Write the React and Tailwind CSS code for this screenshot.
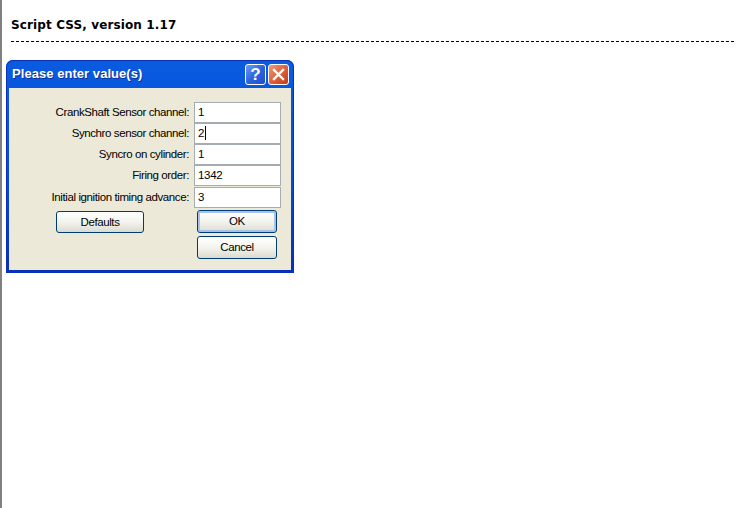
const fields = [
  { label: 'CrankShaft Sensor channel:', value: '1' },
  { label: 'Synchro sensor channel:', value: '2', caret: true },
  { label: 'Syncro on cylinder:', value: '1' },
  { label: 'Firing order:', value: '1342' },
  { label: 'Initial ignition timing advance:', value: '3', gap: true },
];

function XpButton({ label, focused }) {
  return (
    <button
      className={`h-[23px] w-[80px] rounded-[3px] border border-[#003c74] bg-gradient-to-b from-white via-[#f4f4ee] to-[#dcdbd0] text-[11.5px] leading-none tracking-[-0.4px] text-black ${
        focused ? 'shadow-[inset_0_0_0_2px_#a9c2e8]' : ''
      }`}
    >
      {label}
    </button>
  );
}

function TitleButtons() {
  return (
    <div className="flex gap-[2px]">
      <div className="flex h-[21px] w-[21px] items-center justify-center rounded-[3px] border border-white bg-gradient-to-br from-[#6f9bf0] via-[#2f62e0] to-[#1f4ecb] text-[17px] font-bold leading-none text-white">
        ?
      </div>
      <div className="flex h-[21px] w-[21px] items-center justify-center rounded-[3px] border border-white bg-gradient-to-br from-[#ee9a7e] via-[#e0603c] to-[#c23a1a]">
        <svg width="13" height="13" viewBox="0 0 13 13">
          <path d="M2 2 L11 11 M11 2 L2 11" stroke="#fff" strokeWidth="2.4" strokeLinecap="square" />
        </svg>
      </div>
    </div>
  );
}

export default function App() {
  return (
    <div className="h-[508px] w-[736px] overflow-hidden border-l-2 border-[#808080] bg-white font-['Liberation_Sans',sans-serif] text-black">
      <div className="pl-[9px] pt-[18px]">
        <h1 className="h-[15px] font-['DejaVu_Sans',sans-serif] text-[12px] font-bold leading-[15px] tracking-[0.12px]">
          Script CSS, version 1.17
        </h1>
        <div className="mt-[8px] h-px w-[725px] bg-[repeating-linear-gradient(90deg,#000_0,#000_3px,transparent_3px,transparent_5px)]" />
      </div>

      <div className="ml-[4px] mt-[18px] w-[288px] rounded-t-[7px] bg-gradient-to-b from-[#0a5be0] via-[#0050dc] to-[#0831b8] px-[3px] pb-[3px] shadow-[inset_0_0_0_1px_#0831b8]">
        <div className="flex h-[28px] items-center justify-between pl-[3px] pr-[2px]">
          <span className="text-[13px] font-bold tracking-[0.05px] text-white [text-shadow:1px_1px_0_#0f2f9a]">
            Please enter value(s)
          </span>
          <TitleButtons />
        </div>

        <div className="h-[182px] bg-[#ece9d8] pt-[14px]">
          <div className="flex flex-col">
            {fields.map((f) => (
              <div
                key={f.label}
                className={`mb-px flex h-[20px] items-center justify-end pr-[10px] ${f.gap ? 'mt-px' : ''}`}
              >
                <span className="mr-[5px] pt-[2px] text-[11.5px] tracking-[-0.4px]">{f.label}</span>
                <div className="flex h-[21px] w-[87px] items-center border border-[#a5acb2] bg-white pl-[3px] pt-[2px] text-[11.5px] tracking-[-0.3px]">
                  {f.value}
                  {f.caret && <span className="mb-[2px] ml-px h-[14px] w-px bg-black" />}
                </div>
              </div>
            ))}
          </div>
          <div className="mt-[2px] flex justify-between pl-[47px] pr-[14px]">
            <div className="flex items-start pt-px">
              <button className="h-[22px] w-[88px] rounded-[3px] border border-[#003c74] bg-gradient-to-b from-white via-[#f4f4ee] to-[#dcdbd0] pt-px text-[11.5px] leading-none tracking-[-0.4px]">
                Defaults
              </button>
            </div>
            <div className="flex flex-col gap-[3px]">
              <XpButton label="OK" focused />
              <XpButton label="Cancel" />
            </div>
          </div>
        </div>
      </div>
    </div>
  );
}
